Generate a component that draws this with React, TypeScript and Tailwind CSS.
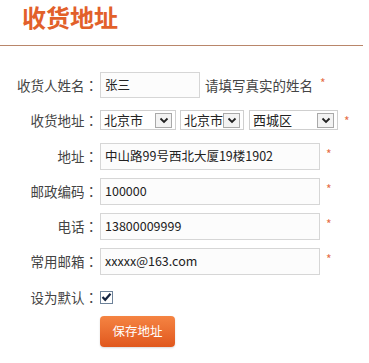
import React from "react";

const font = "font-['Noto_Sans_CJK_SC','Noto_Sans',sans-serif]";

function Star({ className = "" }: { className?: string }) {
  return <span className={`text-[12px] leading-none text-[#e66e48] self-start mt-[5px] ${className}`}>*</span>;
}

// fullwidth colon centred in its box, like the original UI font
function Label({ text }: { text: string }) {
  return (
    <div className="w-[98px] shrink-0 flex justify-end text-[#444] text-[13.5px] whitespace-nowrap">
      <span>{text}</span>
      <span className="font-['Noto_Sans_CJK_TC',sans-serif]">：</span>
    </div>
  );
}

function Field({ value, width = "w-[220px]" }: { value: string; width?: string }) {
  return (
    <div className={`${width} h-full ml-[2px] border border-[#d6d6d6] bg-[#fcfcfc] pl-[4px] flex items-center text-[12.5px] text-[#222] whitespace-nowrap`}>
      {value}
    </div>
  );
}

function Select({ value, width, className = "" }: { value: string; width: string; className?: string }) {
  return (
    <div className={`${width} h-[20px] border border-[#cfcfcf] bg-white flex items-center justify-between pl-[3px] pr-[3px] text-[13px] text-[#222] whitespace-nowrap ${className}`}>
      <span>{value}</span>
      <span className="w-[17px] h-[15px] shrink-0 border border-[#a9a9a9] bg-[#f3f3f3] flex items-center justify-center">
        <svg width="10" height="7" viewBox="0 0 10 7">
          <path d="M1.5 1.5 L5 5 L8.5 1.5" fill="none" stroke="#222" strokeWidth="1.8" />
        </svg>
      </span>
    </div>
  );
}

export default function App() {
  return (
    <div className={`w-[369px] h-[363px] bg-white overflow-hidden ${font}`}>
      <div className="h-[45px] pl-[22px] pt-[5px]">
        <h1 className="text-[24px] leading-[24px] font-bold text-[#e2602a]">收货地址</h1>
      </div>
      <div className="w-[363px] h-px bg-[#b9866a]" />

      <div className="flex flex-col">
        <div className="flex items-center h-[26px] mt-[26px]">
          <Label text="收货人姓名" />
          <Field value="张三" width="w-[100px]" />
          <span className="ml-[5px] text-[13.5px] text-[#444]">请填写真实的姓名</span>
          <Star className="ml-[7px]" />
        </div>

        <div className="flex items-center h-[20px] mt-[12px]">
          <Label text="收货地址" />
          <Select value="北京市" width="w-[76px]" className="ml-[2px]" />
          <Select value="北京市" width="w-[64px]" className="ml-[4px]" />
          <Select value="西城区" width="w-[89px]" className="ml-[5px]" />
          <Star className="ml-[6px] mt-[2px]" />
        </div>

        <div className="flex items-center h-[27px] mt-[13px]">
          <Label text="地址" />
          <Field value="中山路99号西北大厦19楼1902" />
          <Star className="ml-[6px]" />
        </div>

        <div className="flex items-center h-[27px] mt-[8px]">
          <Label text="邮政编码" />
          <Field value="100000" />
          <Star className="ml-[6px]" />
        </div>

        <div className="flex items-center h-[27px] mt-[8px]">
          <Label text="电话" />
          <Field value="13800009999" />
          <Star className="ml-[6px]" />
        </div>

        <div className="flex items-center h-[27px] mt-[8px]">
          <Label text="常用邮箱" />
          <Field value="xxxxx@163.com" />
          <Star className="ml-[6px]" />
        </div>

        <div className="flex items-center h-[20px] mt-[12px]">
          <Label text="设为默认" />
          <span className="ml-[2px] w-[13px] h-[13px] border border-[#6d8299] bg-white flex items-center justify-center">
            <svg width="11" height="10" viewBox="0 0 11 10">
              <path d="M1.5 5 L4.2 7.8 L9.5 1.8" fill="none" stroke="#13233f" strokeWidth="2.2" />
            </svg>
          </span>
        </div>

        <div className="pl-[100px] mt-[9px]">
          <button className="w-[75px] h-[31px] rounded-[4px] bg-gradient-to-b from-[#f58442] to-[#e0571c] text-white text-[12.5px] shadow-[0_1px_2px_rgba(0,0,0,0.15)]">
            保存地址
          </button>
        </div>
      </div>
    </div>
  );
}
